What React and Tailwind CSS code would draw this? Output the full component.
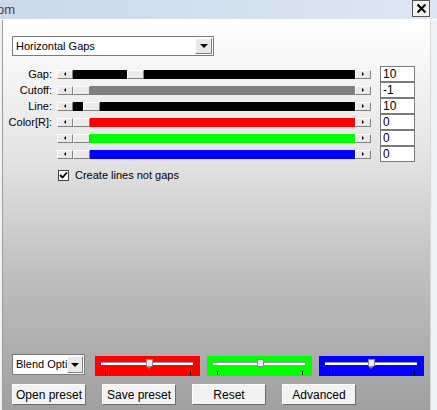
import React from 'react';

const font = { fontFamily: '"Liberation Sans", Arial, sans-serif' };

function ArrowBtn({ dir }) {
  return (
    <div className="w-[16px] h-[9px] bg-[#ece9e4] border-t border-l border-t-white border-l-white border-b border-r border-b-[#808080] border-r-[#808080] flex items-center justify-center shrink-0">
      {dir === 'left' ? (
        <div className="w-0 h-0 border-y-[2px] border-y-transparent border-r-[2px] border-r-black" />
      ) : (
        <div className="w-0 h-0 border-y-[2px] border-y-transparent border-l-[2px] border-l-black" />
      )}
    </div>
  );
}

function Thumb() {
  return (
    <div className="w-[17px] h-[9px] bg-[#ecebe8] border-t border-l border-t-white border-l-white border-b border-r border-b-[#808080] border-r-[#808080] shrink-0" />
  );
}

function Slider({ color, offset }) {
  return (
    <div className="flex items-center w-[314px]">
      <ArrowBtn dir="left" />
      <div className={`flex h-[9px] w-[282px] ${color}`}>
        <div style={{ width: offset }} className="shrink-0" />
        <Thumb />
      </div>
      <ArrowBtn dir="right" />
    </div>
  );
}

function Row({ label, color, offset, value }) {
  return (
    <div className="flex items-center h-[16px]">
      <div className="w-[50px] text-right text-[11px] text-black leading-none pr-[1px]">{label}</div>
      <div className="ml-[4px]">
        <Slider color={color} offset={offset} />
      </div>
      <div className="ml-[9px] w-[35px] h-[16px] bg-white border border-[#7a7a7a] text-[12px] leading-[14px] pl-[2px] text-black">{value}</div>
    </div>
  );
}

function ColorBox({ bg, thumb }) {
  return (
    <div className={`relative w-[105px] h-[20px] ${bg}`}>
      <div className="absolute left-[6px] top-[6px] w-[92px] h-[3px] bg-white border-t border-t-[#9a9a9a]" />
      <div className="absolute top-[3px] w-[7px] h-[10px]" style={{ left: thumb }}>
        <div className="w-[7px] h-[7px] bg-[#e8e8e8] border border-[#8a8a8a] border-b-0" />
        <div className="w-0 h-0 border-x-[3.5px] border-x-transparent border-t-[3px] border-t-[#8a8a8a]" />
      </div>
      <div className="absolute left-[10px] top-[15px] w-[1px] h-[4px] bg-black" />
      <div className="absolute left-[95px] top-[15px] w-[1px] h-[4px] bg-black" />
    </div>
  );
}

function Button({ children }) {
  return (
    <div className="w-[74px] h-[21px] bg-[#f2f2f2] border-t border-l border-t-white border-l-white border-b border-r border-b-[#6b6b6b] border-r-[#6b6b6b] flex items-center justify-center text-[12px] text-black">
      {children}
    </div>
  );
}

export default function App() {
  return (
    <div className="w-[437px] h-[410px] flex flex-col overflow-hidden bg-[#f0f0f0]" style={font}>
      {/* title bar */}
      <div className="h-[19px] flex items-center bg-[linear-gradient(to_right,#ccd9ea,#d6e1ee_60%,#dfe8f2)] shrink-0">
        <div className="ml-[-3px] text-[13px] text-[#444] leading-none">om</div>
        <div className="ml-auto mr-[7px] w-[18px] h-[17px] mt-[-2px] bg-[#f4f4f4] border border-[#555] flex items-center justify-center">
          <svg width="11" height="11" viewBox="0 0 11 11">
            <path d="M1.5 1.5 L9.5 9.5 M9.5 1.5 L1.5 9.5" stroke="black" strokeWidth="2.2" />
          </svg>
        </div>
      </div>
      <div className="h-[1px] bg-white shrink-0" />
      <div className="flex flex-1">
        <div className="w-[2px] bg-[#f2f2f2]" />
        <div className="w-[1px] bg-[#9c9c9c]" />
        <div className="flex-1 flex flex-col bg-[linear-gradient(to_bottom,#ffffff,#e4e4e4_35%,#bfbfbf_65%,#a0a0a0)]">
          {/* top select */}
          <div className="ml-[9px] mt-[16px] w-[202px] h-[20px] bg-white border border-[#7a7a7a] flex items-center">
            <div className="flex-1 text-[11px] pl-[3px] text-black">Horizontal Gaps</div>
            <div className="w-[17px] h-[16px] mr-[1px] bg-[#ece9e4] border-t border-l border-t-white border-l-white border-b border-r border-b-[#808080] border-r-[#808080] flex items-center justify-center">
              <div className="w-0 h-0 border-x-[4px] border-x-transparent border-t-[4px] border-t-black" />
            </div>
          </div>

          <div className="mt-[10px] flex flex-col">
            <Row label="Gap:" color="bg-black" offset={54} value="10" />
            <Row label="Cutoff:" color="bg-[#808080]" offset={0} value="-1" />
            <Row label="Line:" color="bg-black" offset={10} value="10" />
            <Row label="Color[R]:" color="bg-[#ff0000]" offset={0} value="0" />
            <Row label="" color="bg-[#00ff00]" offset={0} value="0" />
            <Row label="" color="bg-[#0000ff]" offset={0} value="0" />
          </div>

          <div className="mt-[5px] ml-[55px] flex items-center">
            <div className="w-[11px] h-[11px] bg-white border border-[#404040] flex items-center justify-center">
              <svg width="9" height="9" viewBox="0 0 9 9">
                <path d="M1 4 L3.5 6.5 L8 1.5" stroke="black" strokeWidth="1.8" fill="none" />
              </svg>
            </div>
            <div className="ml-[6px] text-[11px] text-black">Create lines not gaps</div>
          </div>

          {/* bottom */}
          <div className="mt-auto ml-[9px] flex items-center">
            <div className="w-[73px] h-[21px] bg-white border border-[#7a7a7a] flex items-center">
              <div className="flex-1 text-[11px] pl-[3px] text-black overflow-hidden whitespace-nowrap">Blend Opti</div>
              <div className="w-[16px] h-[17px] mr-[1px] bg-[#ece9e4] border-t border-l border-t-white border-l-white border-b border-r border-b-[#808080] border-r-[#808080] flex items-center justify-center">
                <div className="w-0 h-0 border-x-[4px] border-x-transparent border-t-[4px] border-t-black" />
              </div>
            </div>
            <div className="ml-[10px] mt-[3px] flex gap-[7px]">
              <ColorBox bg="bg-[#ff0000]" thumb={51} />
              <ColorBox bg="bg-[#00ff00]" thumb={50} />
              <ColorBox bg="bg-[#0000ff]" thumb={49} />
            </div>
          </div>
          <div className="ml-[9px] mt-[8px] mb-[5px] flex gap-[16px]">
            <Button>Open preset</Button>
            <Button>Save preset</Button>
            <Button>Reset</Button>
            <Button>Advanced</Button>
          </div>
        </div>
        <div className="w-[1px] bg-[#d8d8d8]" />
        <div className="w-[6px] bg-[#eef0f3]" />
      </div>
    </div>
  );
}
